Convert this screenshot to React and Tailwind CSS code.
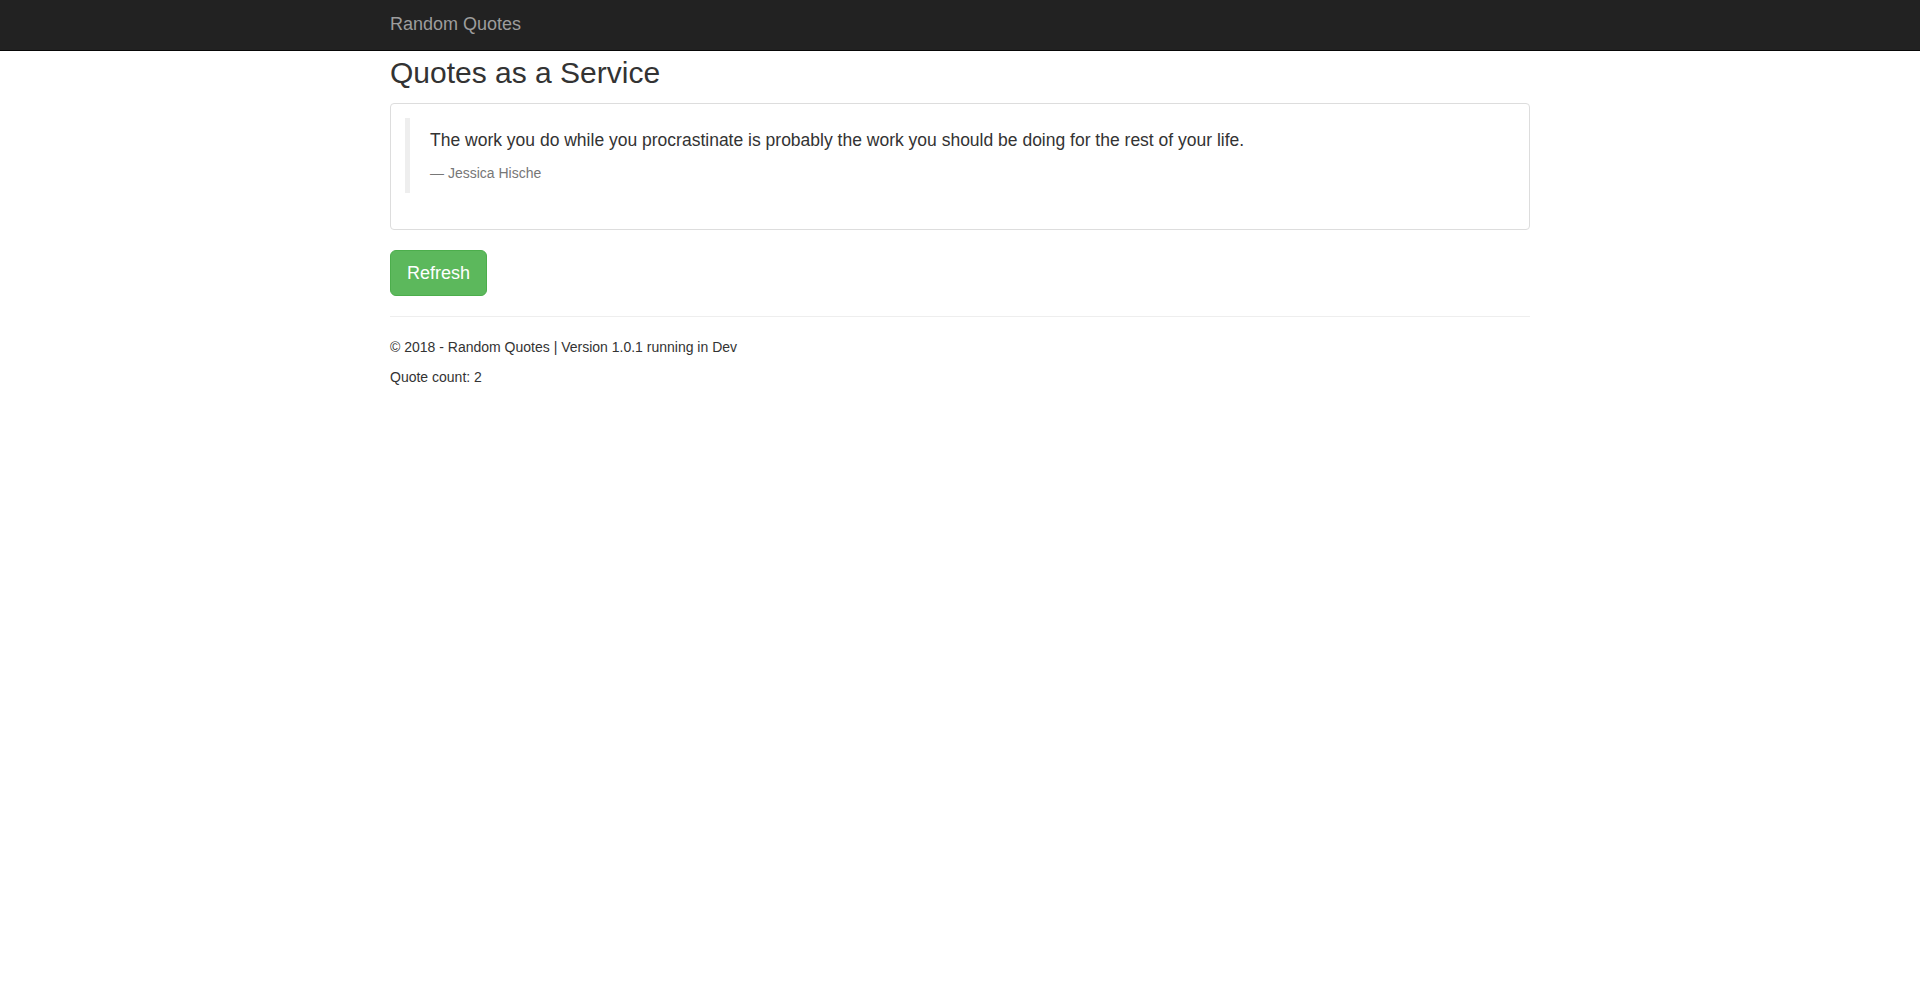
export default function App() {
  return (
    <div className="min-h-screen bg-white text-[14px] leading-[20px] text-[#333]" style={{ fontFamily: '"Liberation Sans", Arial, sans-serif' }}>
      {/* Navbar */}
      <nav className="h-[51px] bg-[#222] border-b border-[#080808]">
        <div className="w-[1170px] mx-auto px-[15px]">
          <a href="#" className="block pt-[14px] pb-[16px] text-[18px] leading-[20px] text-[#9d9d9d]">Random Quotes</a>
        </div>
      </nav>

      <div className="w-[1170px] mx-auto px-[15px]">
        <h2 className="mt-[5px] mb-[14px] text-[30px] leading-[33px] font-normal">Quotes as a Service</h2>

        {/* Quote card */}
        <div className="border border-[#ddd] rounded-[4px] px-[14px] pt-[14px] pb-[16px]">
          <blockquote className="mb-[20px] py-[10px] px-[20px] border-l-[5px] border-[#eee] text-[17.5px] leading-[25px]">
            <p className="mb-[10px]">The work you do while you procrastinate is probably the work you should be doing for the rest of your life.</p>
            <footer className="text-[14px] leading-[20px] text-[#777]">&mdash; Jessica Hische</footer>
          </blockquote>
        </div>

        <button className="mt-[20px] px-[16px] py-[10px] text-[18px] leading-[24px] text-white bg-[#5cb85c] border border-[#4cae4c] rounded-[6px]">
          Refresh
        </button>

        <hr className="my-[20px] border-t border-[#eee]" />

        <footer>
          <p className="mb-[10px]">&copy; 2018 - Random Quotes | Version 1.0.1 running in Dev</p>
          <p>Quote count: 2</p>
        </footer>
      </div>
    </div>
  );
}
